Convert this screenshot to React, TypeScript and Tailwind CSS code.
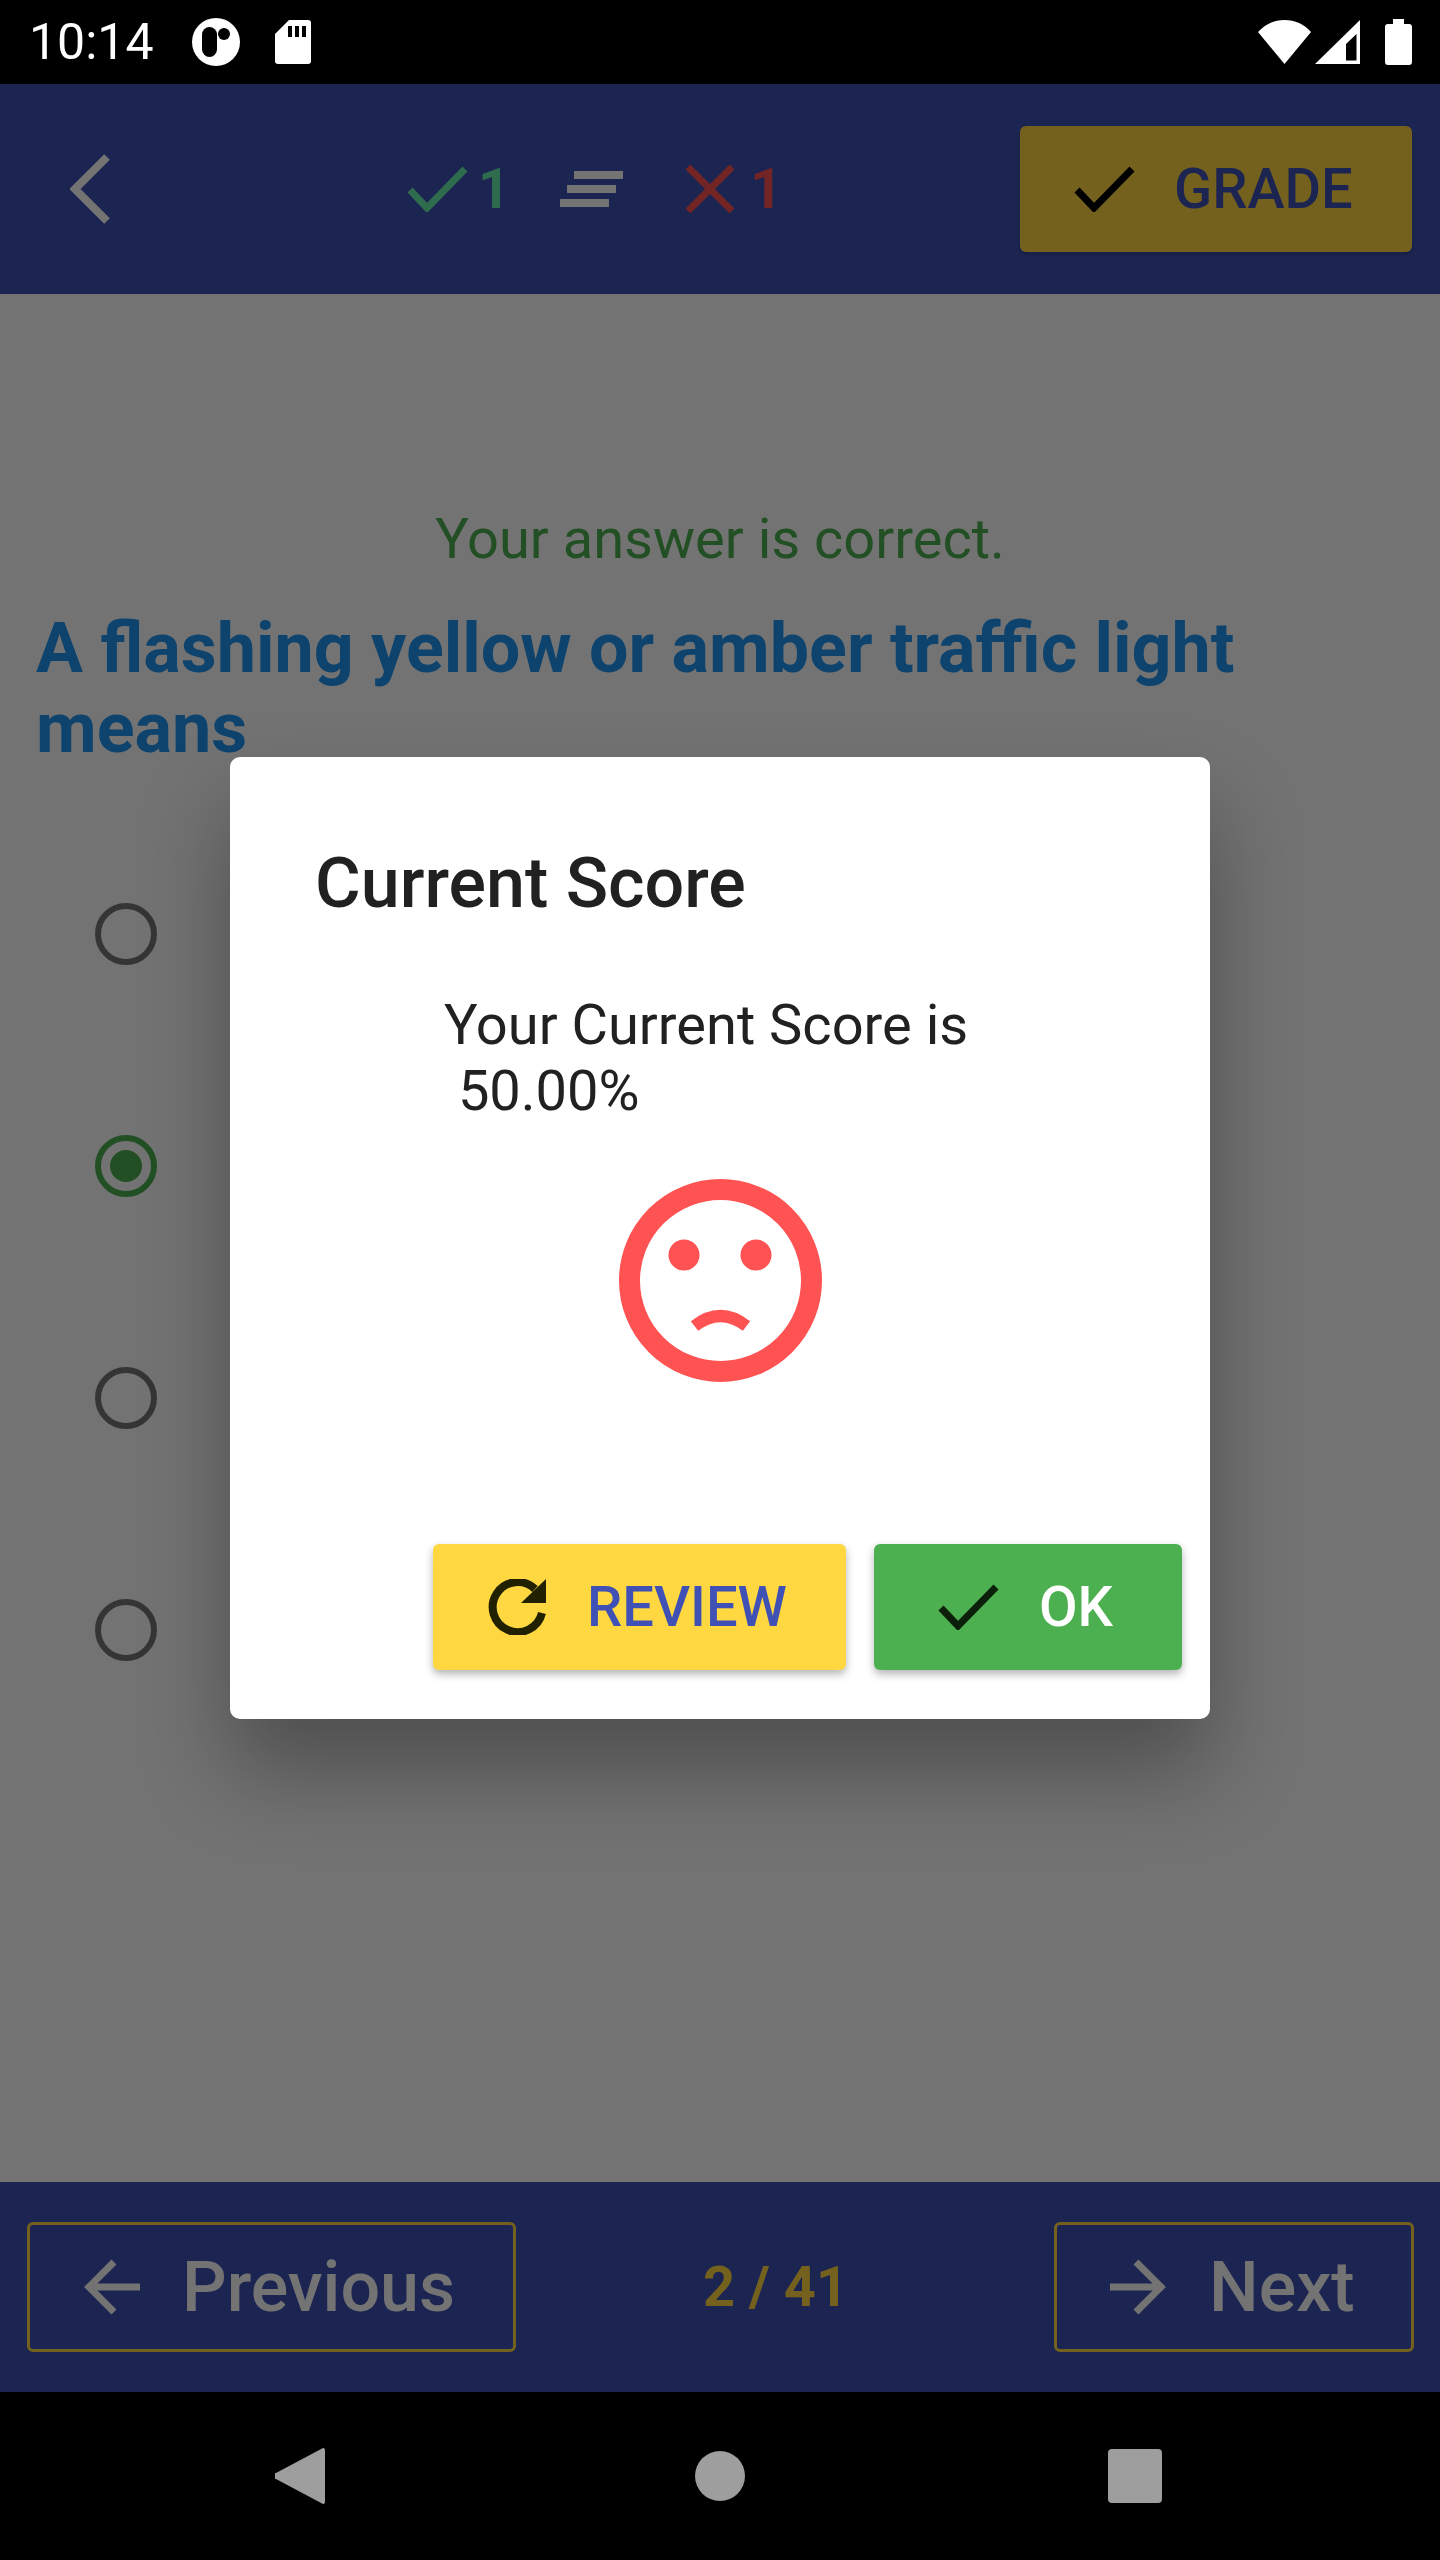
const roboto = "font-['Roboto',sans-serif]";

// plain tick used by the grade / ok buttons and the header tally
const Tick = ({ className = "" }: { className?: string }) => (
  <svg viewBox="0 0 61 46" fill="none" stroke="currentColor" strokeWidth="7" className={className}>
    <polyline points="3,24 20,42 58,3" />
  </svg>
);

const StatusBar = () => (
  <div className="flex h-[84px] shrink-0 items-center bg-black pl-[29px] pr-[28px] text-white">
    <span className={`${roboto} w-[123px] text-[50px] leading-none font-normal`}>10:14</span>
    <svg viewBox="0 0 48 48" className="ml-[40px] h-[48px] w-[48px]">
      <circle cx="24" cy="24" r="24" fill="#fff" />
      <rect x="10" y="9" width="15" height="30" rx="7.5" fill="#000" />
      <circle cx="32" cy="16" r="6" fill="#000" />
    </svg>
    <svg viewBox="0 0 36 44" className="ml-[35px] h-[44px] w-[36px]">
      <path d="M14 0H33a3 3 0 0 1 3 3V41a3 3 0 0 1-3 3H3a3 3 0 0 1-3-3V14Z" fill="#fff" />
      <rect x="13" y="6" width="4" height="11" fill="#000" />
      <rect x="20" y="6" width="4" height="11" fill="#000" />
      <rect x="27" y="6" width="4" height="11" fill="#000" />
    </svg>
    <div className="ml-auto flex items-center">
      <svg viewBox="0 0 53 44" className="h-[44px] w-[53px]">
        <path d="M26.5 44 0 12C7 4 16 0 26.5 0S46 4 53 12Z" fill="#fff" />
      </svg>
      <svg viewBox="0 0 45 44" className="ml-[4px] h-[44px] w-[45px]">
        <path d="M45 0V44H0Z" fill="#fff" />
        <path d="M41.5 14V40.5H31V24Z" fill="#000" />
      </svg>
      <svg viewBox="0 0 27 46" className="ml-[25px] h-[46px] w-[27px]">
        <path d="M8 0H19V5H24a3 3 0 0 1 3 3V43a3 3 0 0 1-3 3H3a3 3 0 0 1-3-3V8a3 3 0 0 1 3-3H8Z" fill="#fff" />
      </svg>
    </div>
  </div>
);

const Header = () => (
  <div className={`${roboto} flex h-[210px] shrink-0 items-center bg-[#3F51B5] pl-[70px] pr-[28px] font-medium text-[56px] leading-none`}>
    <svg viewBox="0 0 40 70" fill="none" stroke="#fff" strokeWidth="8" className="h-[70px] w-[40px]">
      <polyline points="37,3 5,35 37,67" />
    </svg>
    <Tick className="ml-[297px] h-[46px] w-[61px] text-[#69F0AE]" />
    <span className="ml-[10px] font-bold text-[#69F0AE]">1</span>
    <div className="ml-[50px] flex w-[63px] flex-col gap-[6px]">
      <div className="ml-[14px] h-[8px] w-[49px] bg-white" />
      <div className="ml-[7px] h-[8px] w-[49px] bg-white" />
      <div className="h-[8px] w-[49px] bg-white" />
    </div>
    <svg viewBox="0 0 50 48" fill="none" stroke="#FF5252" strokeWidth="7" className="ml-[62px] h-[48px] w-[50px]">
      <path d="M3 2 47 46M47 2 3 46" />
    </svg>
    <span className="ml-[15px] font-bold text-[#FF5252]">1</span>
    <button className="ml-auto flex h-[126px] w-[392px] items-center rounded-[6px] bg-[#FFD740] pl-[54px] shadow-md">
      <Tick className="h-[46px] w-[61px] text-black" />
      <span className="ml-[39px] text-[#3F51B5]">GRADE</span>
    </button>
  </div>
);

const Radio = ({ checked = false }: { checked?: boolean }) => (
  <div className={`flex h-[62px] w-[62px] items-center justify-center rounded-full border-[6px] ${checked ? "border-[#4CAF50]" : "border-[#757575]"}`}>
    {checked && <div className="h-[32px] w-[32px] rounded-full bg-[#4CAF50]" />}
  </div>
);

const Question = () => (
  <div className={`${roboto} flex-1 bg-white`}>
    <p className="mt-[210px] text-center text-[56px] leading-[70px] text-[#4CAF50]">Your answer is correct.</p>
    <h1 className="mt-[34px] pl-[36px] pr-[36px] text-[70px] leading-[80px] font-bold text-[#2196F3]">
      A flashing yellow or amber traffic light means
    </h1>
    <div className="mt-[135px] flex flex-col gap-[170px] pl-[95px]">
      <Radio />
      <Radio checked />
      <Radio />
      <Radio />
    </div>
  </div>
);

const Pager = () => (
  <div className={`${roboto} flex h-[210px] shrink-0 items-center bg-[#3F51B5] pl-[27px] pr-[26px] text-white`}>
    <button className="flex h-[130px] w-[489px] items-center rounded-[6px] border-[3px] border-[#FFD740] pl-[54px]">
      <svg viewBox="0 0 56 56" fill="none" stroke="currentColor" strokeWidth="7" className="h-[56px] w-[56px]">
        <path d="M30 3 5 28 30 53M5 28H56" />
      </svg>
      <span className="ml-[42px] text-[70px] leading-none font-medium">Previous</span>
    </button>
    <span className="ml-[187px] text-[56px] leading-none font-bold text-[#FFD740]">2 / 41</span>
    <button className="ml-auto flex h-[130px] w-[360px] items-center rounded-[6px] border-[3px] border-[#FFD740] pl-[53px]">
      <svg viewBox="0 0 56 56" fill="none" stroke="currentColor" strokeWidth="7" className="h-[56px] w-[56px]">
        <path d="M26 3 51 28 26 53M51 28H0" />
      </svg>
      <span className="ml-[43px] text-[70px] leading-none font-medium">Next</span>
    </button>
  </div>
);

const NavBar = () => (
  <div className="flex h-[168px] shrink-0 items-center bg-black pl-[275px]">
    <svg viewBox="0 0 50 56" className="h-[56px] w-[50px]">
      <path d="M48 0a2 2 0 0 1 2 2V54a2 2 0 0 1-2 2L1 31a3 3 0 0 1 0-6Z" fill="#9E9E9E" />
    </svg>
    <div className="ml-[370px] h-[50px] w-[50px] rounded-full bg-[#9E9E9E]" />
    <div className="ml-[363px] h-[54px] w-[54px] rounded-[4px] bg-[#9E9E9E]" />
  </div>
);

const SadFace = () => (
  <svg viewBox="0 0 203 203" className="h-[203px] w-[203px]">
    <circle cx="101.5" cy="101.5" r="91" fill="none" stroke="#FF5252" strokeWidth="21" />
    <circle cx="65" cy="76" r="15.5" fill="#FF5252" />
    <circle cx="137" cy="76" r="15.5" fill="#FF5252" />
    <path d="M75.5 147Q101.5 127 127.5 147" fill="none" stroke="#FF5252" strokeWidth="12" />
  </svg>
);

const ScoreDialog = () => (
  <div className={`${roboto} flex h-[962px] w-[980px] flex-col rounded-[10px] bg-white shadow-[0_52px_90px_rgba(0,0,0,0.32)]`}>
    <h2 className="mt-[91px] pl-[85px] text-[70px] leading-[70px] font-medium text-[#212121]">Current Score</h2>
    <p className="mt-[74px] whitespace-pre pl-[214px] text-[56px] leading-[66px] text-[#212121]">
      {"Your Current Score is\n 50.00%"}
    </p>
    <div className="mt-[55px] flex justify-center">
      <SadFace />
    </div>
    <div className="mt-auto mb-[49px] flex justify-end gap-[28px] pr-[28px] text-[56px] leading-none font-medium">
      <button className="flex h-[126px] w-[413px] items-center rounded-[6px] bg-[#FFD740] pl-[55px] shadow-[0_4px_8px_rgba(0,0,0,0.3)]">
        <svg viewBox="0 0 58 56" fill="none" className="h-[56px] w-[58px] text-[#212100]">
          <path d="M47 10A25 25 0 1 0 54 34" stroke="currentColor" strokeWidth="8" />
          <path d="M58 0V24H33Z" fill="currentColor" />
        </svg>
        <span className="ml-[41px] text-[#3F51B5]">REVIEW</span>
      </button>
      <button className="flex h-[126px] w-[308px] items-center rounded-[6px] bg-[#4CAF50] pl-[64px] shadow-[0_4px_8px_rgba(0,0,0,0.3)]">
        <Tick className="h-[46px] w-[61px] text-[#0b1f0b]" />
        <span className="ml-[40px] text-white">OK</span>
      </button>
    </div>
  </div>
);

export default function App() {
  return (
    <div className="relative flex h-[2560px] w-[1440px] flex-col overflow-hidden">
      <StatusBar />
      <Header />
      <Question />
      <Pager />
      <NavBar />
      {/* Dialog scrim covers everything between the system bars */}
      <div className="absolute top-[84px] bottom-[168px] left-0 right-0 flex items-center justify-center bg-black/[0.55]">
        <ScoreDialog />
      </div>
    </div>
  );
}
